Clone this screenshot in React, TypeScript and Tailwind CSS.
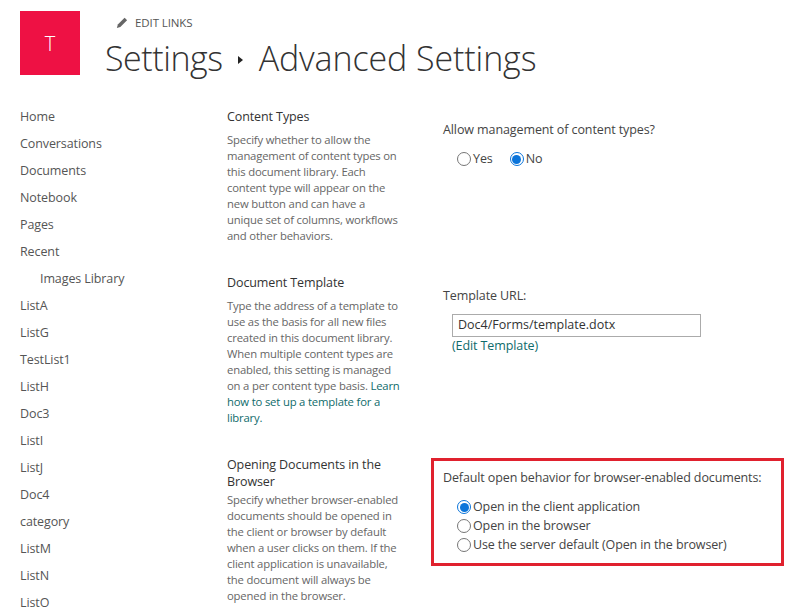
const NAV = [
  { label: 'Home' },
  { label: 'Conversations' },
  { label: 'Documents' },
  { label: 'Notebook' },
  { label: 'Pages' },
  { label: 'Recent' },
  { label: 'Images Library', sub: true },
  { label: 'ListA' },
  { label: 'ListG' },
  { label: 'TestList1' },
  { label: 'ListH' },
  { label: 'Doc3' },
  { label: 'ListI' },
  { label: 'ListJ' },
  { label: 'Doc4' },
  { label: 'category' },
  { label: 'ListM' },
  { label: 'ListN' },
  { label: 'ListO' },
]

function Radio({ checked }: { checked?: boolean }) {
  return (
    <span className={`flex h-[14px] w-[14px] shrink-0 items-center justify-center rounded-full border ${checked ? 'border-[#0a74da]' : 'border-[#767676]'} bg-white`}>
      {checked && <span className="h-[9px] w-[9px] rounded-full bg-[#0a74da]" />}
    </span>
  )
}

function Option({ label, checked }: { label: string; checked?: boolean }) {
  return (
    <div className="flex items-center gap-[2px]">
      <Radio checked={checked} />
      <span>{label}</span>
    </div>
  )
}

export default function App() {
  return (
    <div className="h-[611px] w-[805px] overflow-hidden bg-white text-[#444] [font-family:'Open_Sans',sans-serif]">
      {/* Header */}
      <div className="flex pl-5 pt-[11px]">
        <div className="flex h-[64px] w-[60px] items-center justify-center bg-[#ee1144] pt-[2px] text-[20px] font-light text-white">T</div>
        <div className="ml-[25px]">
          <div className="ml-[10px] flex h-[24px] items-center gap-[6px] text-[11.5px] tracking-[-0.1px] text-[#555]">
            <svg width="14" height="14" viewBox="0 0 14 14" fill="#666">
              <path d="M9.6 1.8l2.5 2.5-6.8 6.8-3.4.9.9-3.4z" />
            </svg>
            <span>EDIT LINKS</span>
          </div>
          <div className="flex h-[46px] items-center whitespace-nowrap text-[34px] font-light tracking-[-0.1px] text-[#333]">
            <span className="tracking-[-0.45px]">Settings</span>
            <span className="ml-[15px] mr-[16px] mt-[4px] h-0 w-0 border-y-[4px] border-l-[5px] border-y-transparent border-l-[#222]" />
            <span>Advanced Settings</span>
          </div>
        </div>
      </div>

      <div className="flex pt-[23px]">
        {/* Quick launch */}
        <nav className="w-[227px] shrink-0 pl-5 text-[12.5px] tracking-[-0.1px] text-[#555]">
          {NAV.map(item => (
            <div key={item.label} className={`flex h-[27px] items-center ${item.sub ? 'pl-5' : ''}`}>
              {item.label}
            </div>
          ))}
        </nav>

        <div className="min-w-0 flex-1">
          {/* Content types */}
          <section className="flex h-[166px]">
            <div className="w-[175px] shrink-0">
              <h3 className="flex h-[27px] items-center text-[12.5px] font-normal tracking-[-0.1px] text-[#333]">Content Types</h3>
              <p className="pt-[1px] text-[11.3px] leading-[16px] tracking-[-0.18px] text-[#666]">
                Specify whether to allow the management of content types on this document library. Each content type will appear on the new button and can have a unique set of columns, workflows and other behaviors.
              </p>
            </div>
            <div className="ml-[41px] pt-[17px] text-[12.5px] tracking-[-0.1px]">
              <div className="h-[18px]">Allow management of content types?</div>
              <div className="mt-[11px] flex items-center gap-[17px] pl-[14px]">
                <Option label="Yes" />
                <Option label="No" checked />
              </div>
            </div>
          </section>

          {/* Document template */}
          <section className="flex h-[182px]">
            <div className="w-[175px] shrink-0">
              <h3 className="flex h-[27px] items-center text-[12.5px] font-normal tracking-[-0.1px] text-[#333]">Document Template</h3>
              <p className="pt-[1px] text-[11.3px] leading-[16px] tracking-[-0.18px] text-[#666]">
                Type the address of a template to use as the basis for all new files created in this document library. When multiple content types are enabled, this setting is managed on a per content type basis. <a className="text-[#0f6b6b]">Learn how to set up a template for a library.</a>
              </p>
            </div>
            <div className="ml-[41px] pt-[17px] text-[12.5px]">
              <div className="h-[18px] tracking-[-0.1px]">Template URL:</div>
              <div className="ml-[9px] mt-[9px] flex h-[23px] w-[249px] items-center border border-[#ababab] px-[5px] text-[#333]">Doc4/Forms/template.dotx</div>
              <div className="ml-[9px] tracking-[-0.1px] text-[#0f6b6b]">(Edit Template)</div>
            </div>
          </section>

          {/* Opening documents */}
          <section className="flex">
            <div className="w-[175px] shrink-0">
              <h3 className="pr-[8px] pt-[4px] text-[12.5px] font-normal leading-[17px] tracking-[-0.1px] text-[#333]">Opening Documents in the Browser</h3>
              <p className="mt-[2px] text-[11.3px] leading-[16px] tracking-[-0.18px] text-[#666]">
                Specify whether browser-enabled documents should be opened in the client or browser by default when a user clicks on them. If the client application is unavailable, the document will always be opened in the browser.
              </p>
            </div>
            <div className="ml-[29px] mt-[6px] h-[108px] w-[353px] shrink-0 border-[3px] border-[#e0212e] pl-[9px] pt-[8px] text-[12.5px] tracking-[-0.12px]">
              <div className="h-[18px]">Default open behavior for browser-enabled documents:</div>
              <div className="mt-[11px] flex flex-col gap-[1px] pl-[14px] leading-[18px]">
                <Option label="Open in the client application" checked />
                <Option label="Open in the browser" />
                <Option label="Use the server default (Open in the browser)" />
              </div>
            </div>
          </section>
        </div>
      </div>
    </div>
  )
}
